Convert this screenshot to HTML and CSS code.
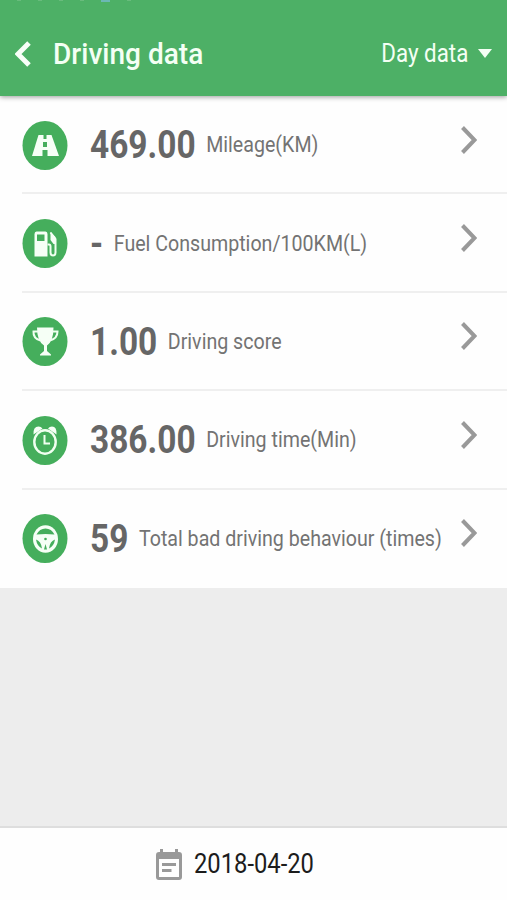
FILE: index.html
```html
<!DOCTYPE html>
<html lang="en">
<head>
    <meta charset="UTF-8">
    <meta name="viewport" content="width=device-width, initial-scale=1.0">
    <title>Driving data</title>
    <link rel="stylesheet" href="styles.css">
</head>
<body>
    <header class="header">
        <div class="status">
            <i></i><i></i><i></i><i></i><i class="blue"></i><i></i>
        </div>
        <svg class="back" viewBox="0 0 16 26"><path d="M14 2 L3 13 L14 24"/></svg>
        <h1 class="title">Driving data</h1>
        <div class="period">Day data</div>
        <svg class="caret" viewBox="0 0 14 9"><path d="M0 0H14L7 9Z"/></svg>
    </header>

    <main class="list">
        <div class="row">
            <svg class="icon" viewBox="0 0 45 49">
                <ellipse cx="22.5" cy="24.5" rx="22.5" ry="24.5"/>
                <path class="fill" d="M16 14H29L36.500 35H9.500Z"/>
                <path class="cut" d="M21 14h3v4h-3zM20.500 21h4v5h-4zM20 29h5v6h-5z"/>
            </svg>
            <div class="line">
                <div class="text"><b>469.00</b><span>Mileage(KM)</span></div>
                <svg class="arrow" viewBox="0 0 16 28"><path d="M1.500 1.500 L13.500 14 L1.500 26.500"/></svg>
            </div>
        </div>
        <div class="row">
            <svg class="icon" viewBox="0 0 45 49">
                <ellipse cx="22.5" cy="24.5" rx="22.5" ry="24.5"/>
                <path class="fill" d="M14 12.500H23Q25 12.500 25 15V37.500H12V15Q12 12.500 14 12.500Z"/>
                <path class="cut" d="M14.500 15.500h7.500v6.500h-7.500z"/>
                <path class="stroke" d="M25 25.500h1.500q1.500 0 1.500 2v6q0 3 2.500 3t2.500-3V20l-5-6.500"/>
                <path class="fill" d="M28 13l5 5v7h-2l-3-4z"/>
            </svg>
            <div class="line">
                <div class="text"><b>-</b><span>Fuel Consumption/100KM(L)</span></div>
                <svg class="arrow" viewBox="0 0 16 28"><path d="M1.500 1.500 L13.500 14 L1.500 26.500"/></svg>
            </div>
        </div>
        <div class="row">
            <svg class="icon" viewBox="0 0 45 49">
                <ellipse cx="22.5" cy="24.5" rx="22.5" ry="24.5"/>
                <path class="fill" d="M14.500 10.500H31Q31 24 24.500 28.500V34L28.500 37.500V38.500H17.500V37.500L21.500 34V28.500Q14.500 24 14.500 10.500Z"/>
                <path class="stroke" d="M16 14.500H11Q10.500 21.500 18 23.500M29.500 14.500H35Q35 21.500 27.500 23.500"/>
            </svg>
            <div class="line">
                <div class="text"><b>1.00</b><span>Driving score</span></div>
                <svg class="arrow" viewBox="0 0 16 28"><path d="M1.500 1.500 L13.500 14 L1.500 26.500"/></svg>
            </div>
        </div>
        <div class="row">
            <svg class="icon" viewBox="0 0 45 49">
                <ellipse cx="22.5" cy="24.5" rx="22.5" ry="24.5"/>
                <path class="fill" d="M11 18.500Q10.500 10.500 16 10.500Q18.500 10.500 20 12.500ZM34 18.500Q34.500 10.500 29.500 10.500Q27 10.500 25.500 12.500Z"/>
                <ellipse class="gap" cx="22.500" cy="26" rx="10.700" ry="11.700"/>
                <path class="stroke" d="M22 19v8.500h5.500"/>
            </svg>
            <div class="line">
                <div class="text"><b>386.00</b><span>Driving time(Min)</span></div>
                <svg class="arrow" viewBox="0 0 16 28"><path d="M1.500 1.500 L13.500 14 L1.500 26.500"/></svg>
            </div>
        </div>
        <div class="row">
            <svg class="icon" viewBox="0 0 45 49">
                <ellipse cx="22.5" cy="24.5" rx="22.5" ry="24.5"/>
                <ellipse class="fill" cx="23" cy="25" rx="12.500" ry="13.800"/>
                <path class="cut" d="M14 20.500Q17 14.500 23 14.500T32 20.500Q23 19.500 14 20.500Z"/>
                <path class="cut" d="M13.500 25.500Q18.500 27 19.500 34.500Q14.500 32 13.500 25.500ZM32.500 25.500Q27.500 27 26.500 34.500Q31.500 32 32.500 25.500ZM23 30L24.500 35.500H21.500Z"/>
                <ellipse class="cut" cx="23" cy="25" rx="1.300" ry="1.300"/>
            </svg>
            <div class="line">
                <div class="text"><b>59</b><span>Total bad driving behaviour (times)</span></div>
                <svg class="arrow" viewBox="0 0 16 28"><path d="M1.500 1.500 L13.500 14 L1.500 26.500"/></svg>
            </div>
        </div>
    </main>

    <footer class="footer">
        <svg class="calendar" viewBox="0 0 26 31">
            <path class="box" d="M4 3V0h3v3h12V0h3v3h1q3 0 3 3v22q0 3-3 3H3q-3 0-3-3V6q0-3 3-3zM3 10v18h20V10z" fill-rule="evenodd"/>
            <path class="box" d="M6 14h14v3H6zM6 20h9.500v3H6z"/>
        </svg>
        <div class="date">2018-04-20</div>
    </footer>
</body>
</html>
```
FILE: styles.css
```css
* {
    box-sizing: border-box;
}

body {
    margin: 0;
    height: 900px;
    display: flex;
    flex-direction: column;
    background-color: #ededed;
    font-family: Roboto, "Liberation Sans", sans-serif;
    overflow: hidden;
}

.header {
    position: relative;
    z-index: 1;
    height: 96px;
    flex: none;
    display: flex;
    align-items: center;
    padding: 11px 15px 0;
    background-color: #4db066;
    color: #f4fff4;
    box-shadow: 0 1px 5px rgba(0, 0, 0, 0.4);
}

/* lower edge of the status bar icons */
.status {
    position: absolute;
    top: 0;
    left: 17px;
    display: flex;
    gap: 17px;
}

.status i {
    width: 4px;
    height: 1px;
    background-color: #68bb7c;
}

.status .blue {
    width: 9px;
    height: 2px;
    background-color: #6bb8b4;
}

.back {
    width: 16px;
    height: 26px;
}

.back path {
    fill: none;
    stroke: #f8fff8;
    stroke-width: 5;
}

.title {
    flex: 1;
    margin: 0 0 0 22px;
    font-size: 30px;
    font-weight: 500;
    line-height: 36px;
    white-space: nowrap;
    transform: scaleX(0.935);
    transform-origin: left;
}

.period {
    font-size: 25px;
    line-height: 32px;
    white-space: nowrap;
    transform: scaleX(0.895);
    transform-origin: right;
}

.caret {
    width: 14px;
    height: 9px;
    margin-left: 10px;
    fill: #f4fff4;
}

.list {
    height: 492px;
    flex: none;
    display: grid;
    grid-template-columns: minmax(0, 1fr);
    grid-template-rows: repeat(5, 1fr);
    background-color: #fefefe;
}

.row {
    display: flex;
    align-items: center;
    padding-left: 22px;
    background: linear-gradient(#efefef, #efefef) 22px 100% / 100% 2px no-repeat;
}

.row:last-child {
    background: none;
}

.icon {
    width: 46px;
    height: 49px;
    flex: none;
    fill: #45ae5c;
}

.icon .fill {
    fill: #f6fff6;
}

.icon .cut {
    fill: #45ae5c;
}

.icon .stroke {
    fill: none;
    stroke: #f0fff0;
    stroke-width: 2;
}

.icon .gap {
    stroke: #f0fff0;
    stroke-width: 2.4;
}

.line {
    flex: 1;
    min-width: 0;
    display: flex;
    align-items: center;
    padding: 0 30px 0 22px;
}

.text {
    flex: 1;
    min-width: 0;
    display: flex;
    align-items: center;
    gap: 12px;
    color: #666;
    white-space: nowrap;
    transform: scaleX(0.88);
    transform-origin: left;
}

.text b {
    font-size: 38px;
    line-height: 44px;
}

.text span {
    font-size: 22.3px;
    line-height: 26px;
    margin-bottom: 2px;
    color: #737373;
}

.arrow {
    width: 16px;
    height: 28px;
    flex: none;
    margin-bottom: 11px;
}

.arrow path {
    fill: none;
    stroke: #999;
    stroke-width: 4;
}

.footer {
    height: 74px;
    flex: none;
    margin-top: auto;
    display: flex;
    align-items: center;
    padding-left: 156px;
    background-color: #fefefe;
    border-top: 2px solid #dedede;
}

.calendar {
    width: 26px;
    height: 31px;
}

.calendar .box {
    fill: #999;
}

.date {
    margin-left: 12px;
    font-size: 27px;
    line-height: 32px;
    color: #1c1c1c;
    white-space: nowrap;
    transform: scaleX(0.88);
    transform-origin: left;
}
```
